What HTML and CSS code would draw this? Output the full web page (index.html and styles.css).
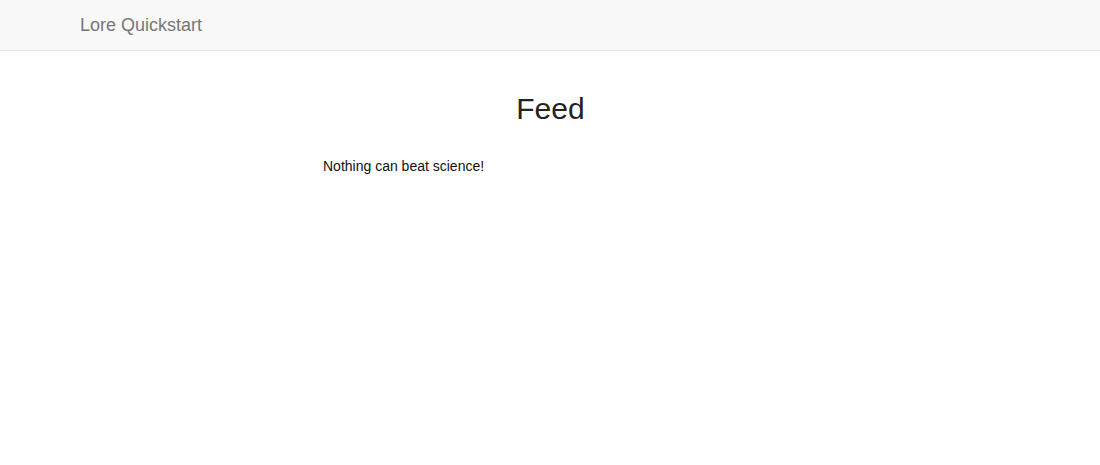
FILE: index.html
```html
<!DOCTYPE html>
<html>
<head>
<meta charset="utf-8">
<link rel="stylesheet" href="styles.css">
</head>
<body>
<nav class="navbar">
  <div class="container">
    <a class="brand" href="#">Lore Quickstart</a>
  </div>
</nav>
<div class="container">
  <div class="feed">
    <h2 class="title">Feed</h2>
    <ul class="tweets">
      <li class="tweet">Nothing can beat science!</li>
    </ul>
  </div>
</div>
</body>
</html>
```
FILE: styles.css
```css
* { box-sizing: border-box; }
html, body { margin: 0; padding: 0; }
body {
  font-family: "Liberation Sans", Arial, sans-serif;
  font-size: 14px;
  line-height: 1.42857;
  color: #333;
  background: #fff;
}
.navbar {
  height: 51px;
  background: #f8f8f8;
  border-bottom: 1px solid #e7e7e7;
  margin-bottom: 20px;
}
.container {
  width: 970px;
  margin: 0 auto;
  padding: 0 15px;
}
.brand {
  display: inline-block;
  height: 50px;
  padding: 15px 0;
  font-size: 18px;
  line-height: 20px;
  color: #777;
  text-decoration: none;
}
.feed {
  width: 455px;
  margin-left: 243px;
}
.title {
  text-align: center;
  font-size: 30px;
  font-weight: 500;
  line-height: 1.1;
  margin: 41px 0 10px;
  color: #222;
}
.tweets {
  list-style: none;
  margin: 0;
  padding: 0;
  margin-top: 32px;
}
.tweet {
  color: #111;
}
```
